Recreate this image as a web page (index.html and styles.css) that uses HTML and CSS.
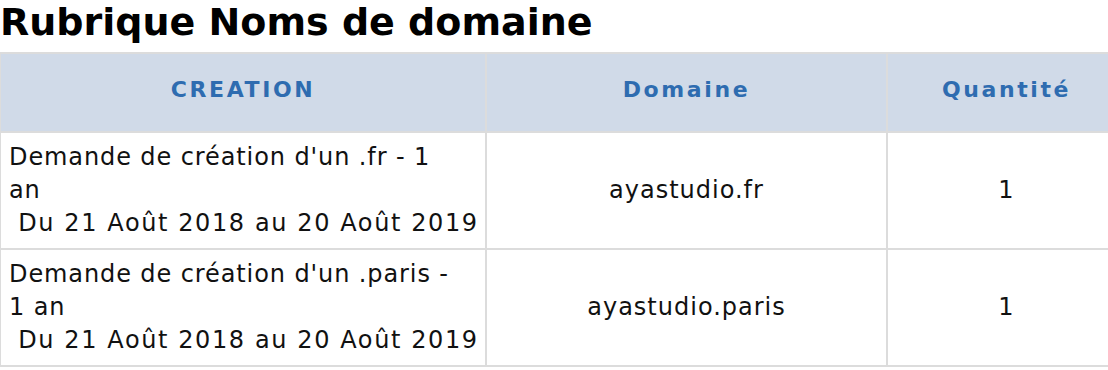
FILE: index.html
```html
<!DOCTYPE html>
<html lang="fr">
<head>
<meta charset="utf-8">
<title>Rubrique Noms de domaine</title>
<link rel="stylesheet" href="styles.css">
</head>
<body>
<h1 class="title">Rubrique Noms de domaine</h1>
<table class="orders">
  <colgroup>
    <col class="c-desc">
    <col class="c-domain">
    <col class="c-qty">
  </colgroup>
  <thead>
    <tr>
      <th>CREATION</th>
      <th>Domaine</th>
      <th>Quantité</th>
    </tr>
  </thead>
  <tbody>
    <tr>
      <td class="desc">Demande de création d'un .fr - 1 an<span class="period">&nbsp;Du 21 Août 2018 au 20 Août 2019</span></td>
      <td class="center">ayastudio.fr</td>
      <td class="center">1</td>
    </tr>
    <tr>
      <td class="desc">Demande de création d'un .paris - 1 an<span class="period">&nbsp;Du 21 Août 2018 au 20 Août 2019</span></td>
      <td class="center">ayastudio.paris</td>
      <td class="center">1</td>
    </tr>
  </tbody>
</table>
</body>
</html>
```
FILE: styles.css
```css
html, body {
  margin: 0;
  padding: 0;
  background: #ffffff;
  overflow: hidden;
}

body {
  font-family: "DejaVu Sans", Verdana, sans-serif;
  color: #111111;
}

.title {
  margin: 0 0 8px 0;
  font-size: 38px;
  line-height: 44px;
  font-weight: bold;
  color: #000000;
}

.orders {
  border-collapse: collapse;
  table-layout: fixed;
  width: 1126px;
  margin-left: -1px;
}

.c-desc { width: 486px; }
.c-domain { width: 401px; }
.c-qty { width: 239px; }

.orders th,
.orders td {
  border: 2px solid #dcdcdc;
  line-height: 33px;
}

.orders th {
  background: #d0dae8;
  color: #2e6cb0;
  font-size: 22px;
  letter-spacing: 2.6px;
  font-weight: bold;
  text-align: center;
  padding: 19px 8px 25px 8px;
}

.orders td {
  font-size: 24px;
  letter-spacing: 1px;
  padding: 8px 8px;
  vertical-align: middle;
}

.orders td.desc {
  letter-spacing: 0.9px;
  padding: 8px 19px 8px 8px;
}

.orders td.desc .period {
  display: block;
  white-space: nowrap;
  letter-spacing: 1.6px;
}

.orders td.center {
  text-align: center;
}
```
